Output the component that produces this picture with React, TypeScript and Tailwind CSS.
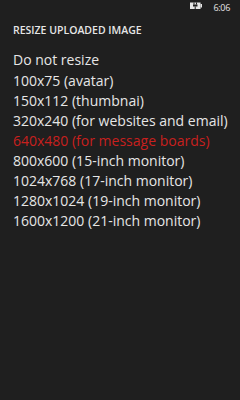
import React from "react";

const items = [
  "Do not resize",
  "100x75 (avatar)",
  "150x112 (thumbnai)",
  "320x240 (for websites and email)",
  "640x480 (for message boards)",
  "800x600 (15-inch monitor)",
  "1024x768 (17-inch monitor)",
  "1280x1024 (19-inch monitor)",
  "1600x1200 (21-inch monitor)",
];

export default function App() {
  return (
    <div
      className="w-[240px] h-[400px] bg-[#1f1f1f] text-[#e6e6e6] overflow-hidden"
      style={{ fontFamily: '"Open Sans", "Noto Sans", sans-serif' }}
    >
      <div className="h-[14px] flex items-center justify-end pr-[10px]">
        <svg width="12" height="7" viewBox="0 0 12 7" className="mt-[-3px]">
          <rect x="0" y="0.5" width="10.5" height="6.5" fill="#e6e6e6" />
          <rect x="10.5" y="2" width="1.5" height="3.5" fill="#e6e6e6" />
          <rect x="3.5" y="0.5" width="1" height="2" fill="#1f1f1f" />
          <rect x="6" y="0.5" width="1" height="2" fill="#1f1f1f" />
          <rect x="3" y="2.5" width="4.5" height="2" fill="#1f1f1f" />
          <rect x="4.7" y="4.5" width="1" height="2.5" fill="#1f1f1f" />
        </svg>
        <span className="ml-[11px] text-[9px] tracking-[-0.3px] leading-none">6:06</span>
      </div>
      <div className="pl-[13px] pt-[10px]">
        <div className="text-[10.5px] font-semibold leading-[12px]">
          RESIZE UPLOADED IMAGE
        </div>
        <div className="mt-[14px] flex flex-col">
          {items.map((t, i) => (
            <div
              key={t}
              className={
                "text-[14px] leading-[20px] whitespace-nowrap " +
                (i === 4 ? "text-[#c8201e]" : "") +
                (i === 0 ? " mb-[1px]" : "")
              }
            >
              {t}
            </div>
          ))}
        </div>
      </div>
    </div>
  );
}
